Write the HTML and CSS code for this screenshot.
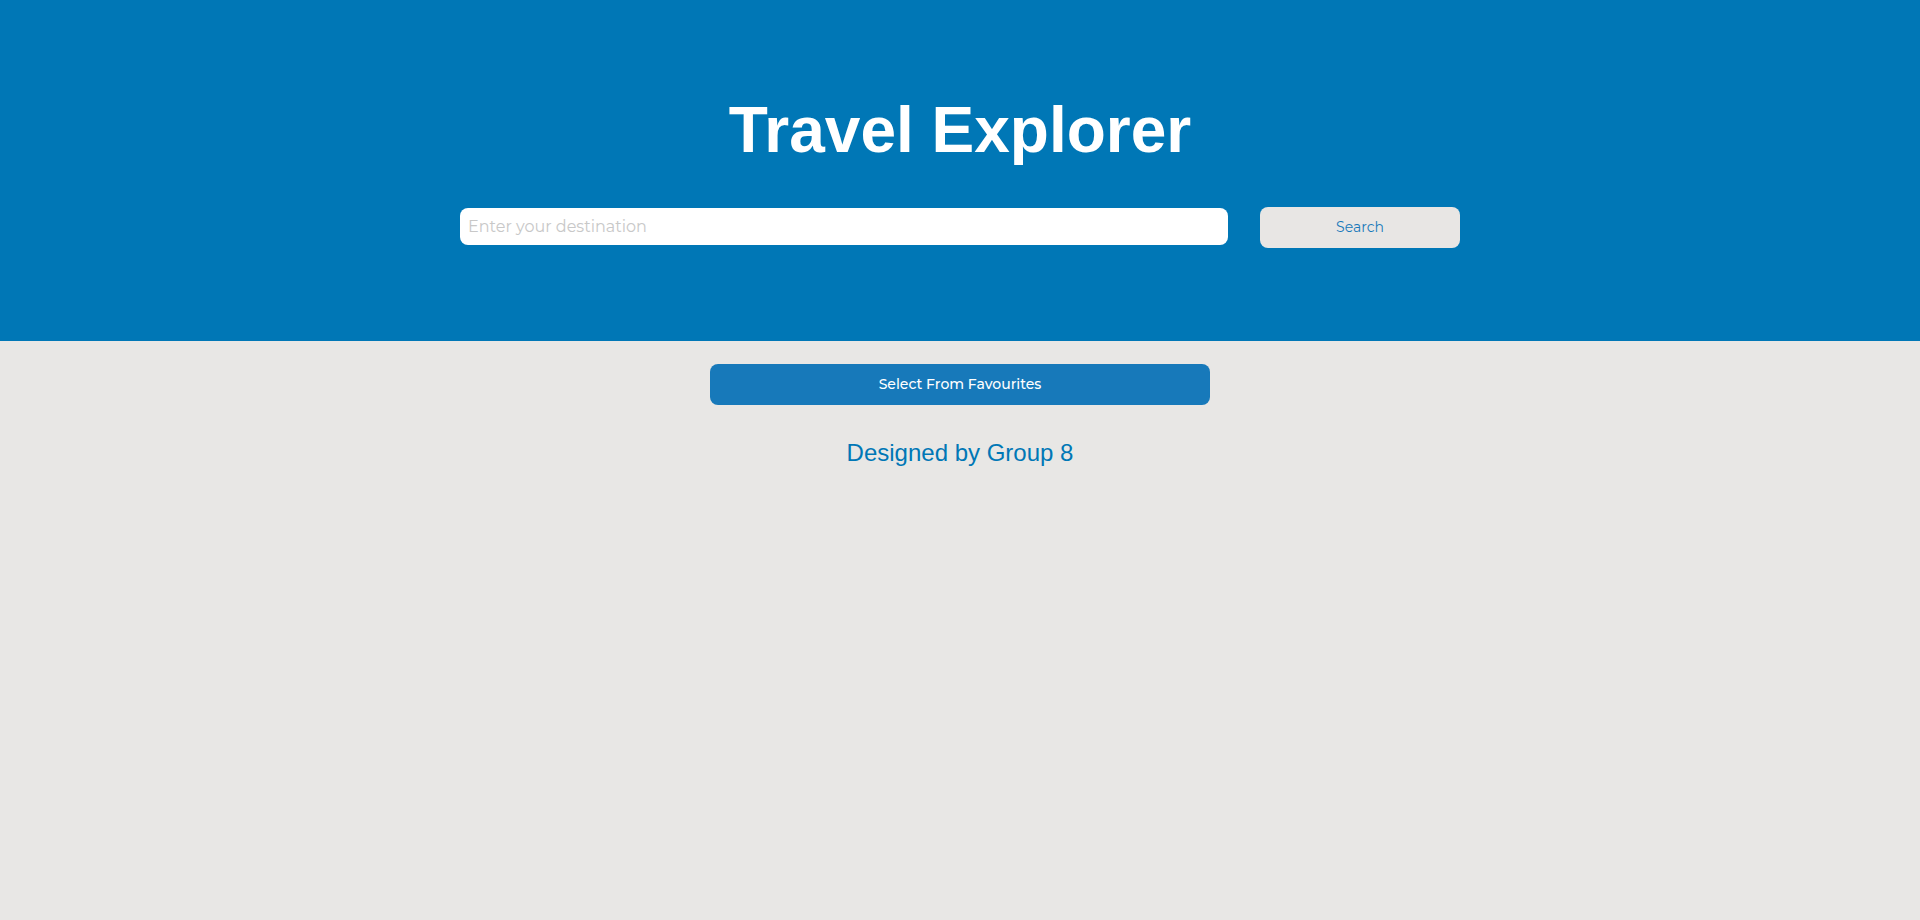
FILE: index.html
```html
<!DOCTYPE html>
<html lang="en">
<head>
<meta charset="utf-8">
<meta name="viewport" content="width=device-width, initial-scale=1">
<title>Travel Explorer</title>
<link rel="stylesheet" href="styles.css">
</head>
<body>
<header class="hero">
  <h1 class="hero-title">Travel Explorer</h1>
  <form class="search">
    <input class="search-input" type="text" placeholder="Enter your destination" aria-label="Destination">
    <button class="button button-search" type="submit">Search</button>
  </form>
</header>
<main class="content">
  <button class="button button-favourites" type="button">Select From Favourites</button>
</main>
<footer class="footer">Designed by Group 8</footer>
</body>
</html>
```
FILE: styles.css
```css
* {
  box-sizing: border-box;
}

body {
  margin: 0;
  background: #e8e7e5;
  font-family: "Liberation Sans", Arial, sans-serif;
}

.hero {
  display: flex;
  flex-direction: column;
  align-items: center;
  gap: 39px;
  padding: 92px 16px 93px;
  background: #0077b6;
}

.hero-title {
  margin: 0;
  color: #fff;
  font-size: 64px;
  line-height: 76px;
  text-align: center;
}

.search {
  display: flex;
  align-items: baseline;
  gap: 32px;
  width: 100%;
  max-width: 1000px;
}

.search-input {
  flex: 1;
  min-width: 0;
  padding: 8px;
  border: 0;
  border-radius: 8px;
  background: #fff;
  color: #333;
  font-family: Montserrat, Inter, sans-serif;
  font-size: 16px;
  line-height: 21px;
}

.search-input::placeholder {
  color: #c8c8c8;
}

.button {
  padding: 10px 16px;
  border: 0;
  border-radius: 8px;
  font-family: Montserrat, Inter, sans-serif;
  font-size: 14px;
  line-height: 21px;
  cursor: pointer;
}

.button-search {
  flex: 0 1 200px;
  background: #e8e6e4;
  color: #1779ba;
}

.button-favourites {
  width: 100%;
  max-width: 500px;
  background: #1779ba;
  color: #fff;
  font-weight: 500;
}

.content {
  display: flex;
  justify-content: center;
  padding: 23px 16px;
}

.footer {
  padding: 11px 16px;
  color: #0077b6;
  font-size: 24px;
  line-height: 28px;
  text-align: center;
}
```
